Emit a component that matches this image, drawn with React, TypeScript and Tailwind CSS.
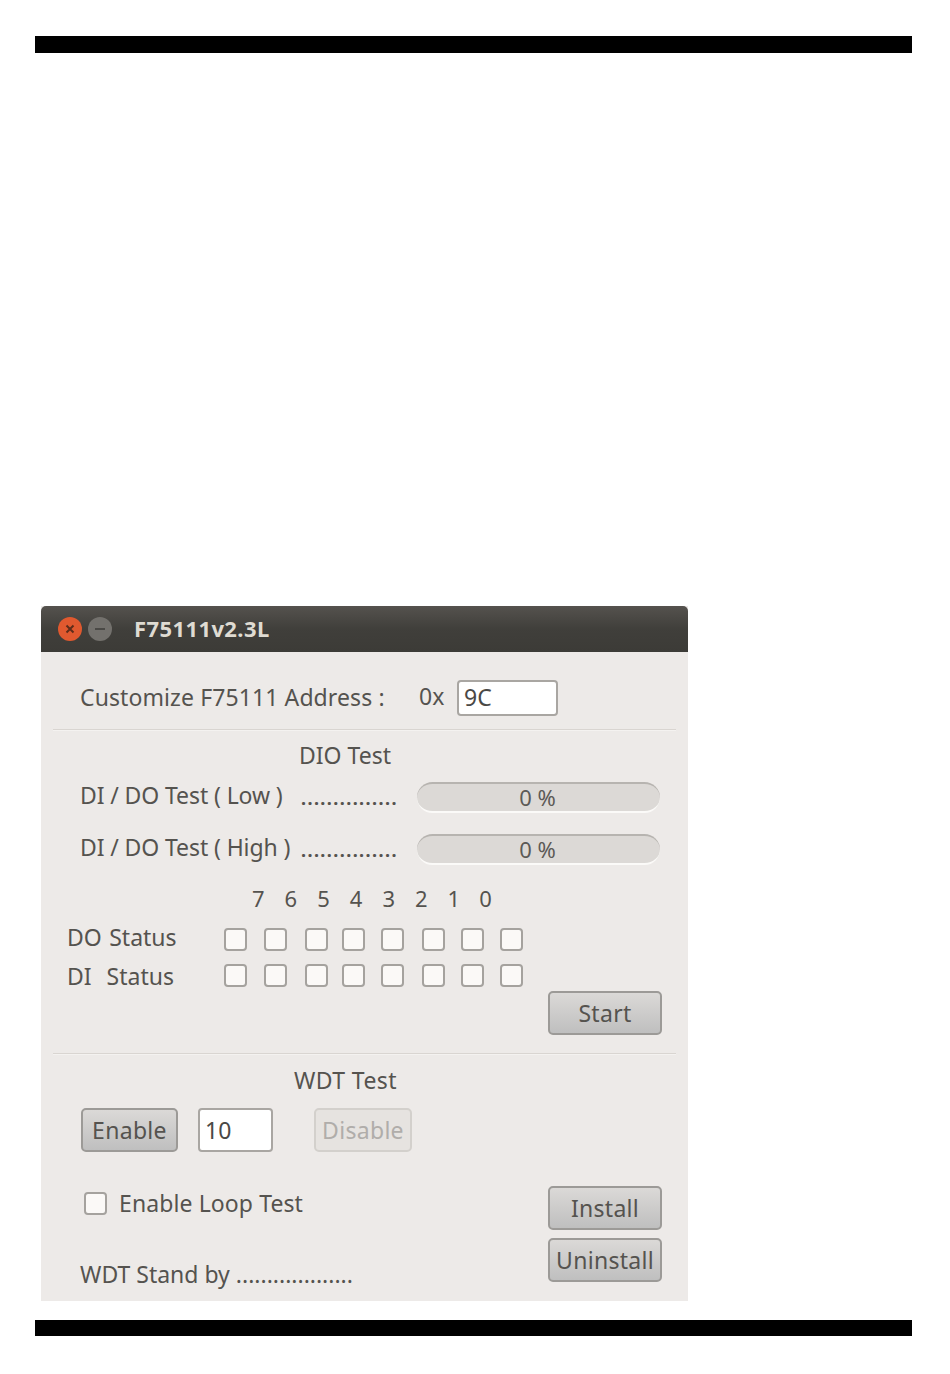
const font = "font-['Noto_Sans',sans-serif]"

const digits = ["7", "6", "5", "4", "3", "2", "1", "0"]
const digitGaps = ["ml-[211px]", "ml-[20px]", "ml-[20px]", "ml-[20px]", "ml-[20px]", "ml-[20px]", "ml-[20px]", "ml-[19px]"]
const boxGaps = ["ml-0", "ml-[17px]", "ml-[18px]", "ml-[14px]", "ml-[16px]", "ml-[18px]", "ml-[16px]", "ml-[16px]"]

function Divider() {
  return <div className="mx-[12px] h-[2px] bg-[#d9d5d1] border-b border-[#f4f2f0]"></div>
}

function Check() {
  return <div className="w-[23px] h-[23px] shrink-0 rounded-[4px] border-2 border-[#a5a29e] bg-[#fbf9f7]"></div>
}

function Push({ title, className, disabled }: { title: string, className: string, disabled?: boolean }) {
  return (
    <button
      className={`${className} h-[44px] rounded-[5px] border-2 flex items-center justify-center text-[23px] tracking-[0.3px] ${
        disabled
          ? "border-[#d3d0cc] bg-[#e6e3e0] text-[#b0adaa]"
          : "border-[#9c9a97] bg-gradient-to-b from-[#dbd9d7] to-[#bfbfbf] text-[#55534f]"
      }`}
    >
      {title}
    </button>
  )
}

function Field({ value, className }: { value: string, className: string }) {
  return (
    <div className={`${className} rounded-[4px] border-2 border-[#a9a6a2] bg-white flex items-center pl-[5px] text-[23px] text-[#4a4845]`}>
      {value}
    </div>
  )
}

function TestRow({ label, className }: { label: string, className: string }) {
  return (
    <div className={`${className} flex items-center h-[31px] pl-[39px]`}>
      <div className="w-[221px] pb-[4px] text-[23px] tracking-[-0.1px] leading-none whitespace-nowrap text-[#55534f]">{label}</div>
      <div className="w-[116px] text-[18px] font-bold leading-none tracking-[1.4px] text-[#55534f] whitespace-nowrap">...............</div>
      <div className="w-[243px] h-[31px] pr-[2px] rounded-full border-t-2 border-t-[#b7b4b0] border-b-2 border-b-[#fbfaf8] bg-[#dcd9d6] flex items-center justify-center text-[22px] text-[#5c5a57]">
        0 %
      </div>
    </div>
  )
}

function StatusRow({ label, className, labelClass }: { label: string, className: string, labelClass: string }) {
  return (
    <div className={`${className} flex items-center h-[23px] pl-[26px]`}>
      <div className={`${labelClass} w-[157px] text-[23px] [word-spacing:1.5px] leading-none whitespace-pre text-[#55534f]`}>{label}</div>
      {boxGaps.map((gap, i) => (
        <div key={i} className={gap}><Check /></div>
      ))}
    </div>
  )
}

export default function App() {
  return (
    <div className={`${font} w-[950px] h-[1374px] bg-white pt-[36px] overflow-hidden`}>
      <div className="ml-[35px] w-[877px] h-[17px] bg-black"></div>

      <div className="mt-[553px] ml-[41px] w-[647px] h-[695px] bg-[#edeae8] flex flex-col">
        <div className="h-[46px] shrink-0 rounded-t-[5px] bg-gradient-to-b from-[#55524e] via-[#403f3b] to-[#3c3b37] flex items-center pl-[17px]">
          <div className="w-[24px] h-[24px] rounded-full bg-[#e0592f] flex items-center justify-center">
            <svg width="10" height="10" viewBox="0 0 10 10">
              <path d="M1.5 1.5 8.5 8.5M8.5 1.5 1.5 8.5" stroke="#5e2c1a" strokeWidth="2" />
            </svg>
          </div>
          <div className="ml-[6px] w-[24px] h-[24px] rounded-full bg-[#73716d] flex items-center justify-center">
            <div className="w-[10px] h-[2px] bg-[#4a4946]"></div>
          </div>
          <div className="ml-[22px] pb-[2px] text-[22px] font-bold leading-none tracking-[0.4px] text-[#dfdbd2]">F75111v2.3L</div>
        </div>

        <div className="h-[77px] shrink-0 flex items-center pl-[39px] pt-[14px] text-[23px] text-[#55534f]">
          <div className="w-[339px] tracking-[0.1px] whitespace-nowrap">Customize F75111 Address :</div>
          <div className="w-[38px] pb-[2px]">0x</div>
          <Field value="9C" className="w-[101px] h-[36px]" />
        </div>
        <Divider />

        <div className="mt-[10px] pl-[258px] text-[23px] leading-[28px] text-[#55534f]">DIO Test</div>
        <TestRow label="DI / DO Test ( Low )" className="mt-[13px]" />
        <TestRow label="DI / DO Test ( High )" className="mt-[21px]" />

        <div className="mt-[19px] flex text-[22px] leading-[28px] text-[#55534f]">
          {digits.map((d, i) => (
            <div key={d} className={digitGaps[i]}>{d}</div>
          ))}
        </div>
        <StatusRow label="DO Status" className="mt-[16px]" labelClass="pb-[4px]" />
        <StatusRow label="DI  Status" className="mt-[13px]" labelClass="pt-[2px]" />

        <div className="mt-[4px] flex justify-end pr-[26px]">
          <Push title="Start" className="w-[114px]" />
        </div>
        <div className="mt-[18px]"><Divider /></div>

        <div className="mt-[11px] pl-[253px] text-[23px] leading-[28px] text-[#55534f] tracking-[0.4px]">WDT Test</div>
        <div className="mt-[14px] flex pl-[40px]">
          <Push title="Enable" className="w-[97px]" />
          <Field value="10" className="ml-[20px] w-[75px] h-[44px]" />
          <Push title="Disable" className="ml-[41px] w-[98px]" disabled />
        </div>

        <div className="mt-[34px] flex justify-between pl-[39px] pr-[26px]">
          <div className="flex flex-col">
            <div className="mt-[6px] flex items-center h-[23px] pl-[4px]">
              <Check />
              <div className="ml-[12px] text-[23px] leading-none tracking-[0.1px] text-[#55534f]">Enable Loop Test</div>
            </div>
            <div className="mt-[45px] flex items-end text-[23px] leading-[28px] text-[#55534f] whitespace-nowrap">
              WDT Stand by ...................
            </div>
          </div>
          <div className="flex flex-col gap-[8px]">
            <Push title="Install" className="w-[114px]" />
            <Push title="Uninstall" className="w-[114px]" />
          </div>
        </div>
      </div>

      <div className="mt-[19px] ml-[35px] w-[877px] h-[16px] bg-black"></div>
    </div>
  )
}
